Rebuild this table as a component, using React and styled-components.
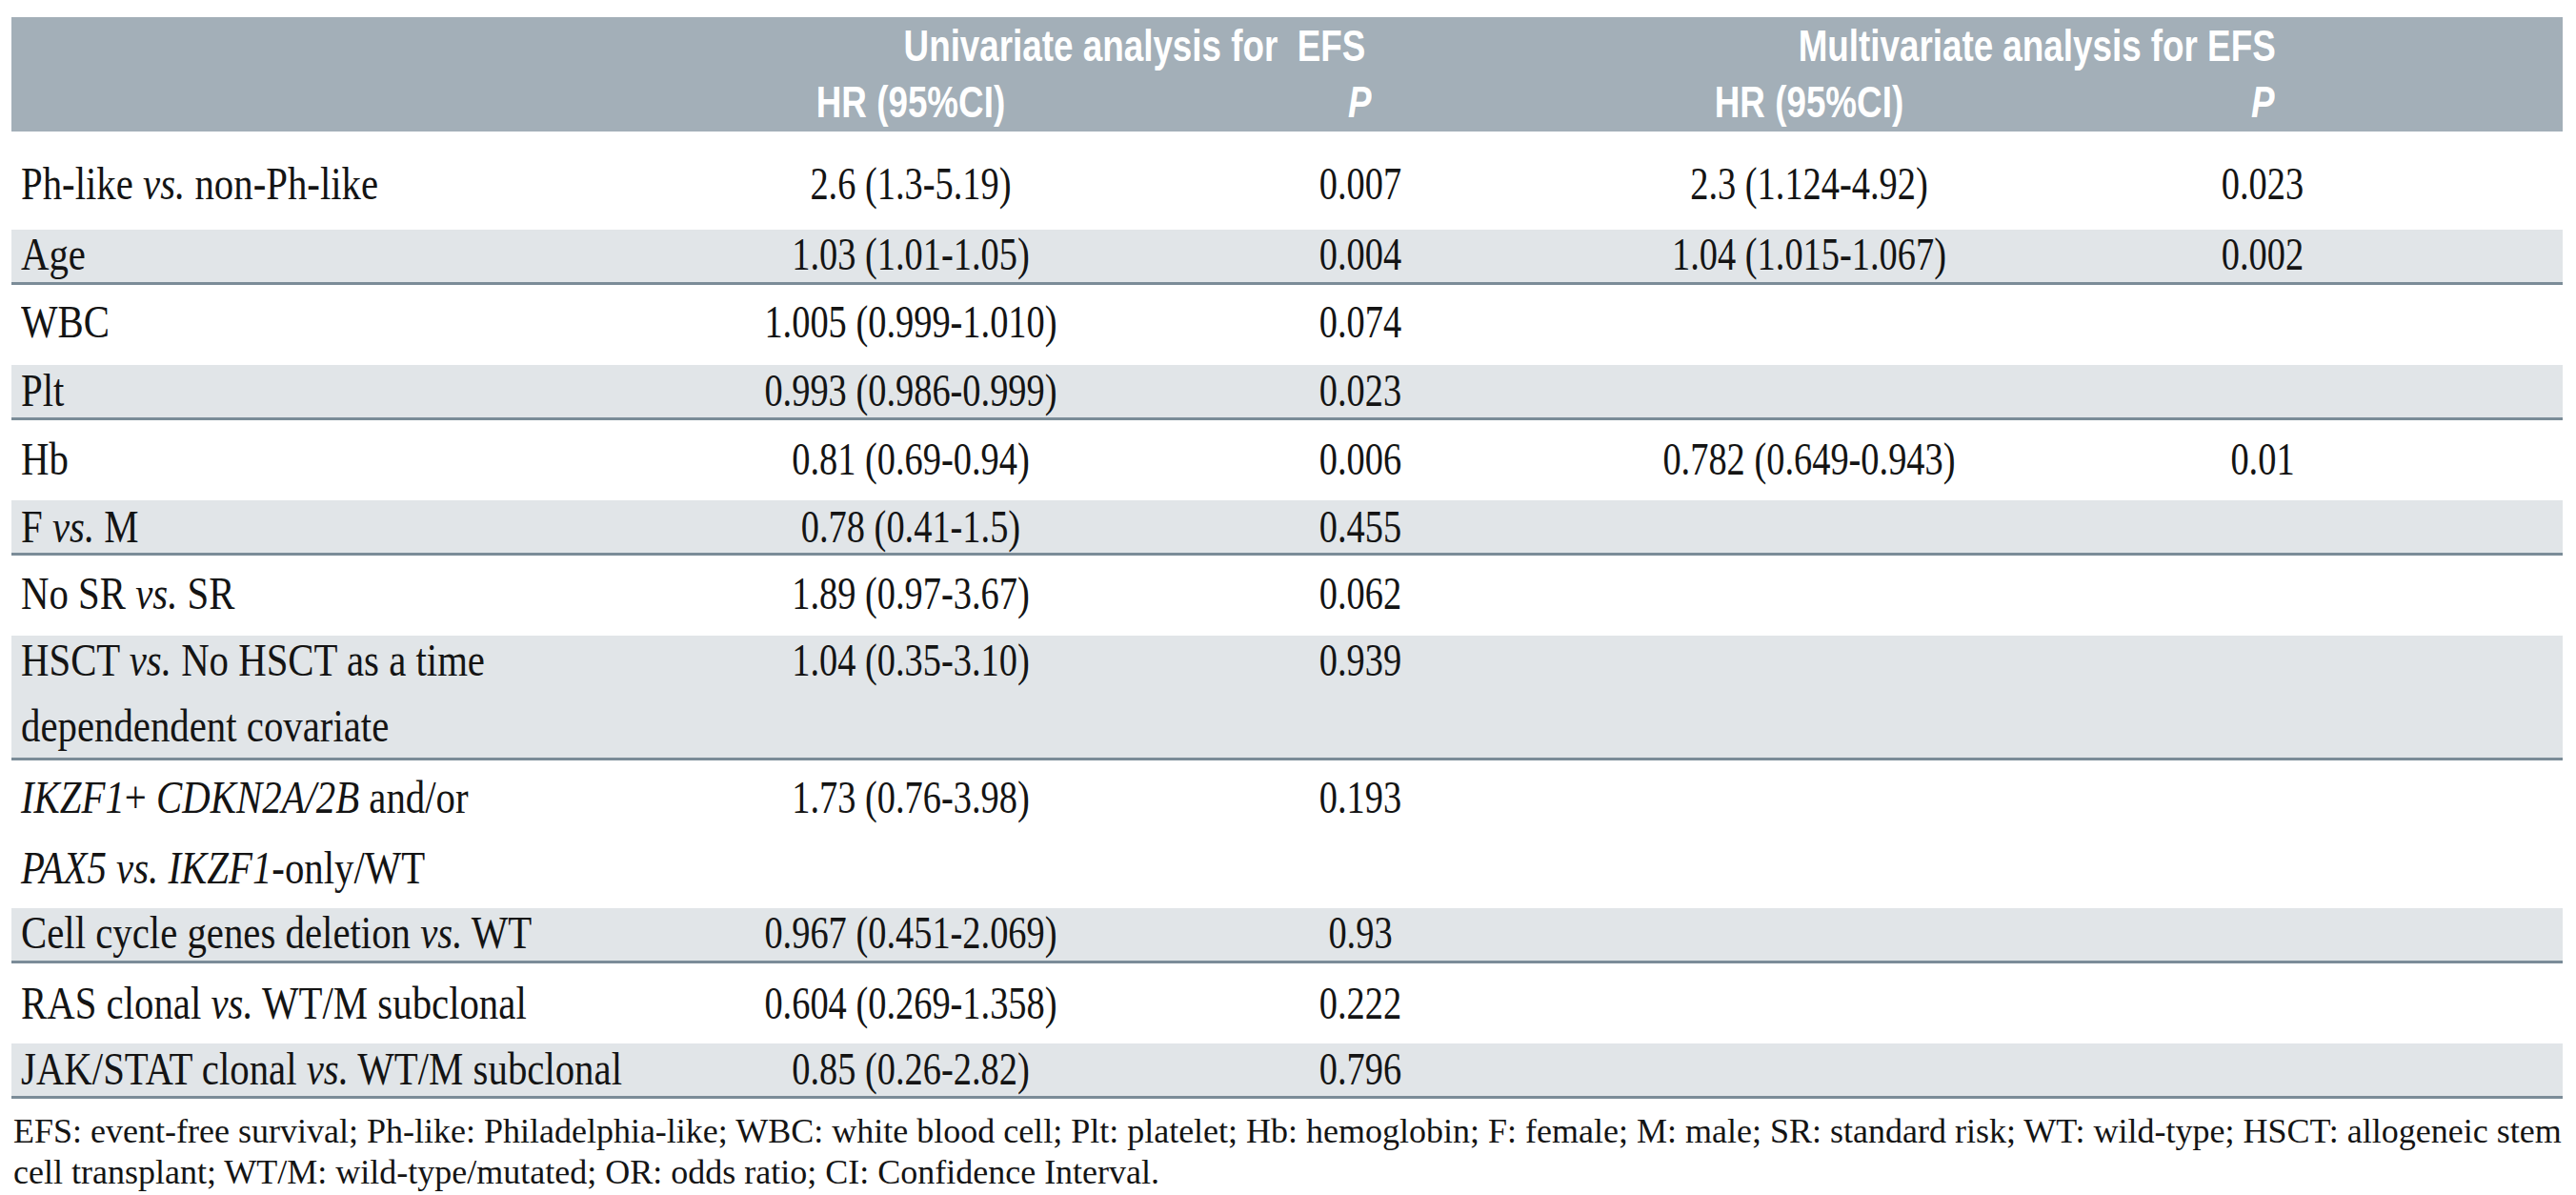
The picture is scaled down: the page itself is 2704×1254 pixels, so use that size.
import React from 'react';
import styled, { createGlobalStyle } from 'styled-components';

const GlobalStyle = createGlobalStyle`
  html, body {
    margin: 0;
    padding: 0;
    background: #ffffff;
  }
  body {
    width: 2704px;
    height: 1254px;
    overflow: hidden;
  }
`;

const COLS = '707px 474px 469px 474px 478px 1fr';

const Page = styled.div`
  padding: 18px 14px 0 12px;
  font-family: "Liberation Serif", "Times New Roman", serif;
  color: #141414;
`;

const Table = styled.div`
  width: 2678px;
  display: flex;
  flex-direction: column;
`;

const HeaderBand = styled.div`
  box-sizing: border-box;
  height: 120px;
  padding-top: 1px;
  background: #a3afb8;
  display: grid;
  grid-template-columns: ${COLS};
  grid-template-rows: 59px 59px;
  font-family: "Liberation Sans", Arial, sans-serif;
  font-weight: 700;
  font-size: 46px;
  line-height: 59px;
  color: #ffffff;
`;

const HeadCell = styled.div`
  grid-column: ${(p) => p.$col};
  grid-row: ${(p) => p.$row};
  text-align: center;
  white-space: nowrap;
`;

const Squeeze = styled.span`
  display: inline-block;
  white-space: nowrap;
  transform: scaleX(${(p) => p.$scale || 0.8});
  transform-origin: ${(p) => p.$origin || 'center'};
`;

const Row = styled.div`
  box-sizing: border-box;
  display: grid;
  grid-template-columns: ${COLS};
  align-items: start;
  height: ${(p) => p.$h}px;
  padding-top: ${(p) => p.$pt}px;
  background: ${(p) => (p.$shade ? '#e1e5e8' : '#ffffff')};
  border-bottom: ${(p) => (p.$rule ? '3px solid #7b8c98' : 'none')};
  font-size: 48px;
  line-height: 52px;
`;

const Label = styled.div`
  padding-left: 10px;
  white-space: nowrap;
`;

const Lines = styled.div`
  display: flex;
  flex-direction: column;
  row-gap: ${(p) => p.$gap}px;
`;

const Value = styled.div`
  text-align: center;
  white-space: nowrap;
`;

const Footnote = styled.p`
  margin: 0;
  padding: 13px 0 0 2px;
  font-size: 36px;
  line-height: 43px;
  white-space: nowrap;
  color: #141414;
`;

const I = styled.i`
  font-style: italic;
`;

const rows = [
  { label: [<>Ph-like <I>vs.</I> non-Ph-like</>], u: '2.6 (1.3-5.19)', up: '0.007', m: '2.3 (1.124-4.92)', mp: '0.023', h: 103, pt: 29 },
  { label: ['Age'], u: '1.03 (1.01-1.05)', up: '0.004', m: '1.04 (1.015-1.067)', mp: '0.002', shade: true, rule: true, h: 58, pt: 0 },
  { label: ['WBC'], u: '1.005 (0.999-1.010)', up: '0.074', h: 84, pt: 13 },
  { label: ['Plt'], u: '0.993 (0.986-0.999)', up: '0.023', shade: true, rule: true, h: 58, pt: 1 },
  { label: ['Hb'], u: '0.81 (0.69-0.94)', up: '0.006', m: '0.782 (0.649-0.943)', mp: '0.01', h: 84, pt: 15 },
  { label: [<>F <I>vs.</I> M</>], u: '0.78 (0.41-1.5)', up: '0.455', shade: true, rule: true, h: 58, pt: 2 },
  { label: [<>No SR <I>vs.</I> SR</>], u: '1.89 (0.97-3.67)', up: '0.062', h: 84, pt: 14 },
  { label: [<>HSCT <I>vs.</I> No HSCT as a time</>, 'dependendent covariate'], gap: 17, u: '1.04 (0.35-3.10)', up: '0.939', shade: true, rule: true, h: 131, pt: 0 },
  { label: [<><I>IKZF1</I>+ <I>CDKN2A/2B</I> and/or</>, <><I>PAX5 vs. IKZF1</I>-only/WT</>], gap: 22, u: '1.73 (0.76-3.98)', up: '0.193', h: 155, pt: 13 },
  { label: [<>Cell cycle genes deletion <I>vs.</I> WT</>], u: '0.967 (0.451-2.069)', up: '0.93', shade: true, rule: true, h: 58, pt: 0 },
  { label: [<>RAS clonal <I>vs.</I> WT/M subclonal</>], u: '0.604 (0.269-1.358)', up: '0.222', h: 84, pt: 16 },
  { label: [<>JAK/STAT clonal <I>vs.</I> WT/M subclonal</>], u: '0.85 (0.26-2.82)', up: '0.796', shade: true, rule: true, h: 58, pt: 1 },
];

function Cell({ children }) {
  return (
    <Value>
      {children ? <Squeeze>{children}</Squeeze> : null}
    </Value>
  );
}

export default function App() {
  return (
    <>
      <GlobalStyle />
      <Page>
        <Table>
          <HeaderBand>
            <HeadCell $col="2 / 4" $row="1">
              <Squeeze>Univariate analysis for&nbsp; EFS</Squeeze>
            </HeadCell>
            <HeadCell $col="4 / 6" $row="1">
              <Squeeze>Multivariate analysis for EFS</Squeeze>
            </HeadCell>
            <HeadCell $col="2" $row="2">
              <Squeeze>HR (95%CI)</Squeeze>
            </HeadCell>
            <HeadCell $col="3" $row="2">
              <Squeeze><I>P</I></Squeeze>
            </HeadCell>
            <HeadCell $col="4" $row="2">
              <Squeeze>HR (95%CI)</Squeeze>
            </HeadCell>
            <HeadCell $col="5" $row="2">
              <Squeeze><I>P</I></Squeeze>
            </HeadCell>
          </HeaderBand>
          {rows.map((r, i) => (
            <Row key={i} $h={r.h} $pt={r.pt} $shade={r.shade} $rule={r.rule}>
              <Label>
                <Lines $gap={r.gap || 0}>
                  {r.label.map((l, j) => (
                    <Squeeze key={j} $origin="left" $scale={0.85}>{l}</Squeeze>
                  ))}
                </Lines>
              </Label>
              <Cell>{r.u}</Cell>
              <Cell>{r.up}</Cell>
              <Cell>{r.m}</Cell>
              <Cell>{r.mp}</Cell>
              <div />
            </Row>
          ))}
        </Table>
        <Footnote>
          EFS: event-free survival; Ph-like: Philadelphia-like; WBC: white blood cell; Plt: platelet; Hb: hemoglobin; F: female; M: male; SR: standard risk; WT: wild-type; HSCT: allogeneic stem
          <br />
          cell transplant; WT/M: wild-type/mutated; OR: odds ratio; CI: Confidence Interval.
        </Footnote>
      </Page>
    </>
  );
}
